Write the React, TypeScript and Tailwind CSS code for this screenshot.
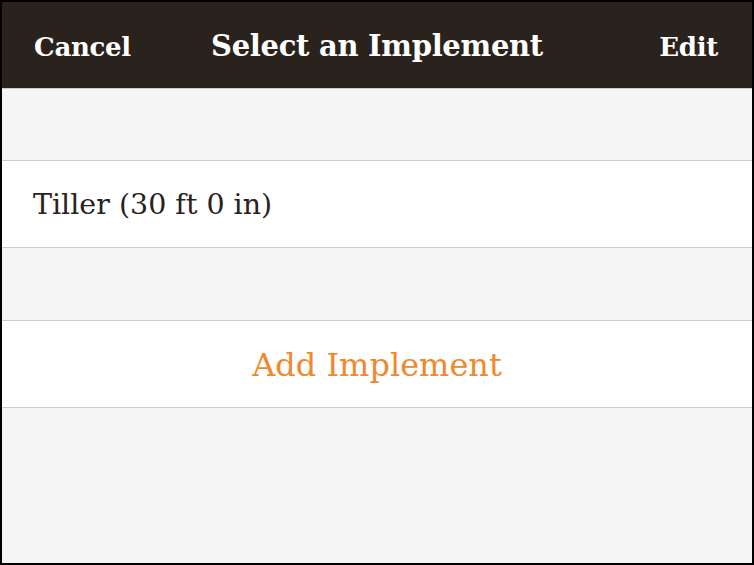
const slab = {fontFamily: '"DejaVu Serif", "Liberation Serif", serif'};

const Divider = () => <div className="h-px bg-[#cccccc]" />;

const App = () => {
  return (
    <div className="w-[754px] h-[565px] border-2 border-black bg-[#f5f5f5] flex flex-col overflow-hidden" style={slab}>
      {/* header */}
      <div className="h-[86px] bg-[#2a221c] grid grid-cols-[1fr_auto_1fr] items-center px-[32px] text-white font-bold">
        <button type="button" className="justify-self-start text-[26px] tracking-[-0.3px] pt-[4px]">Cancel</button>
        <h1 className="text-[29px] tracking-[-0.3px] pt-[4px]">Select an Implement</h1>
        <button type="button" className="justify-self-end text-[26px] tracking-[-0.3px] pt-[4px] mr-[2px]">Edit</button>
      </div>
      <Divider />

      <div className="h-[71px]" />
      <Divider />
      <div className="h-[86px] bg-white flex items-center px-[31px]">
        <span className="text-[28.5px] text-[#2a221c] pt-[2px]">Tiller (30 ft 0 in)</span>
      </div>
      <Divider />

      <div className="h-[72px]" />
      <Divider />
      <button type="button" className="h-[86px] bg-white flex items-center justify-center">
        <span className="text-[32px] text-[#f0892e] pt-[2px]">Add Implement</span>
      </button>
      <Divider />
    </div>
  );
};

export default App;
